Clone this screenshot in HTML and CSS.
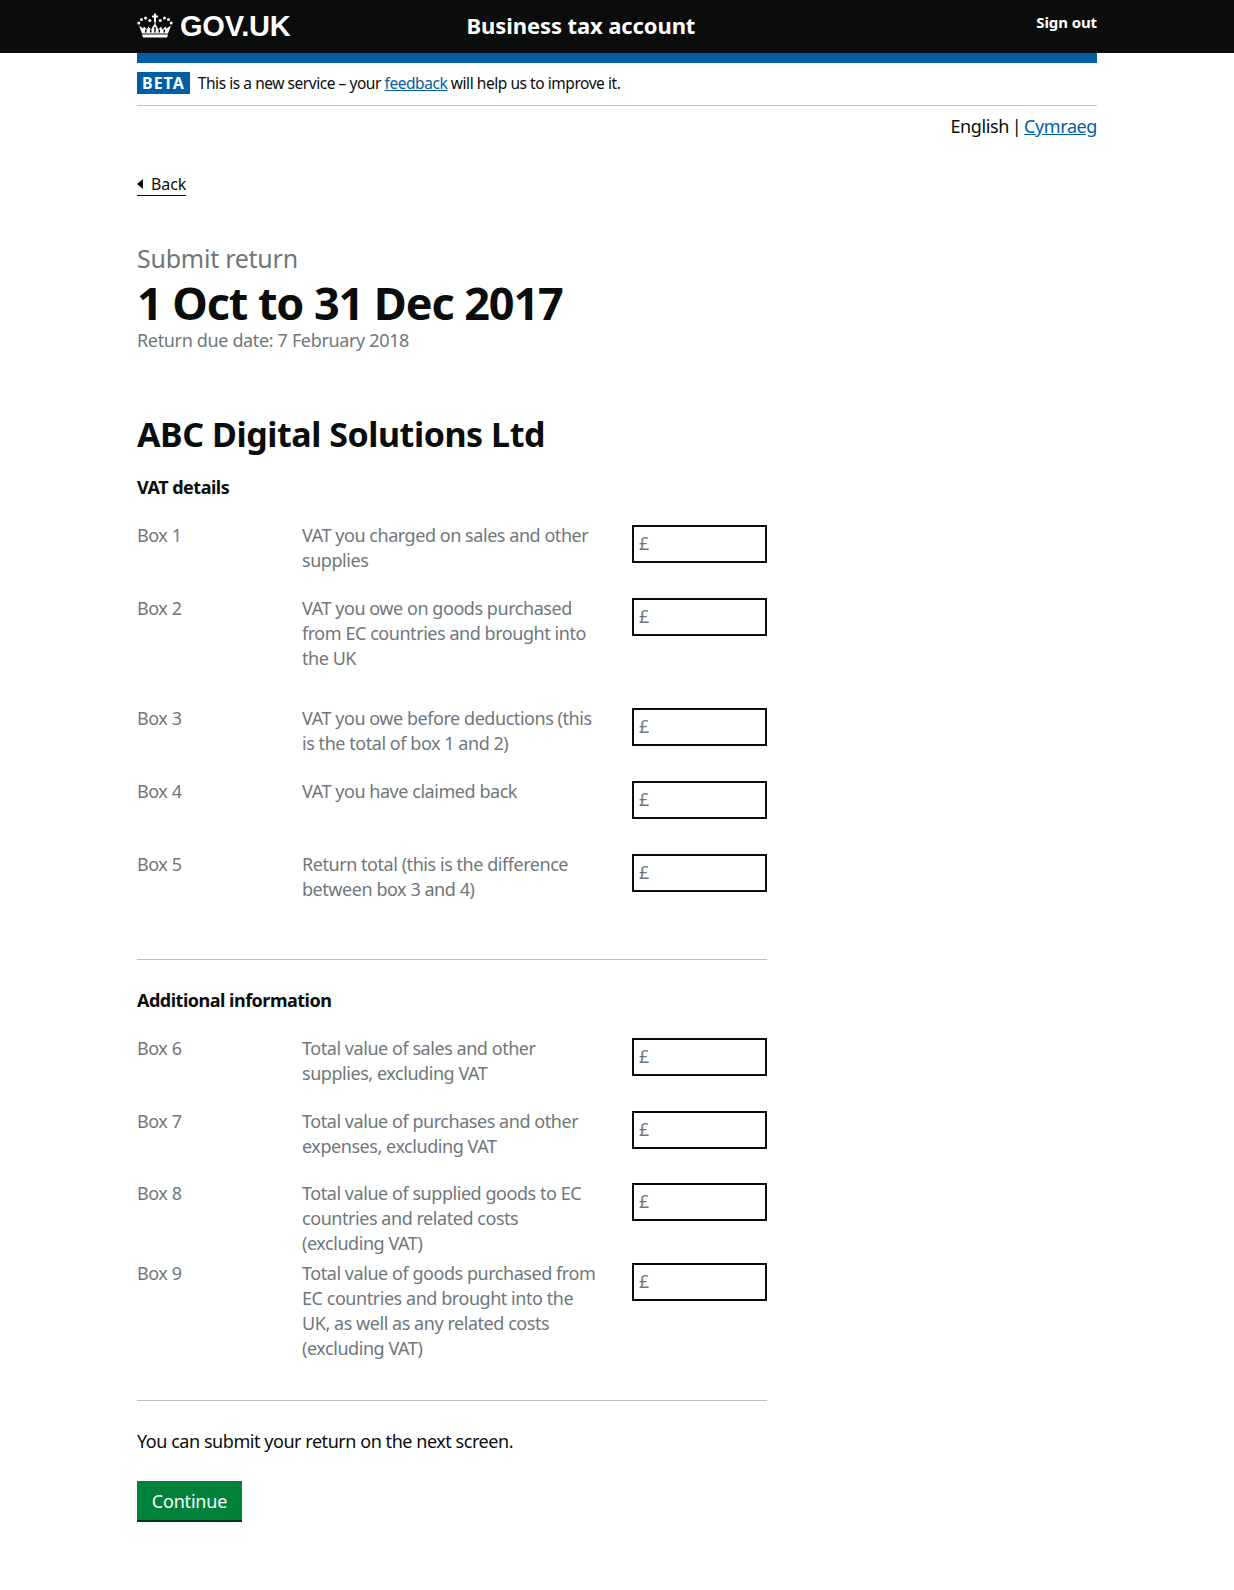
FILE: index.html
```html
<!DOCTYPE html>
<html lang="en">
<head>
    <meta charset="UTF-8">
    <meta name="viewport" content="width=device-width, initial-scale=1.0">
    <title>Submit return</title>
    <link rel="stylesheet" href="styles.css">
</head>
<body>
    <header class="site-header">
        <div class="header-inner">
            <a class="logo" href="#">
                <svg class="crown" width="36" height="26" viewBox="0 0 36 26">
                    <g fill="#fff">
                        <path d="M6 24.500h24l1-3H5z"/>
                        <path d="M5 20.500h26l3-8-4.500 3-1-2-3 3-1.500-3-2.500 3-3-5.500V9h-1v2l-3.500 5.500-2.500-3-1.500 3-3-3-1 2L2 12.500z"/>
                        <rect x="17" y="0.500" width="2" height="8.500"/>
                        <rect x="15" y="2.500" width="6" height="2"/>
                        <circle cx="1.800" cy="10" r="1.500"/>
                        <circle cx="4.500" cy="6.500" r="1.500"/>
                        <circle cx="8.500" cy="5" r="1.500"/>
                        <circle cx="12.800" cy="7.500" r="1.500"/>
                        <circle cx="23.200" cy="7.500" r="1.500"/>
                        <circle cx="27.500" cy="5" r="1.500"/>
                        <circle cx="31.500" cy="6.500" r="1.500"/>
                        <circle cx="34.200" cy="10" r="1.500"/>
                    </g>
                    <g fill="#0b0c0c">
                        <rect x="8" y="16.500" width="1.500" height="3"/>
                        <rect x="13" y="16.500" width="1.500" height="3"/>
                        <rect x="17.200" y="14" width="1.500" height="5.500"/>
                        <rect x="21.500" y="16.500" width="1.500" height="3"/>
                        <rect x="26.500" y="16.500" width="1.500" height="3"/>
                    </g>
                </svg>
                <span>GOV.UK</span>
            </a>
            <a class="service-name" href="#">Business tax account</a>
            <a class="sign-out" href="#">Sign out</a>
        </div>
    </header>

    <div class="wrapper">
        <div class="blue-bar"></div>
        <div class="phase-banner">
            <strong class="phase-tag">BETA</strong>
            <span>This is a new service – your <a href="#">feedback</a> will help us to improve it.</span>
        </div>
        <p class="lang-select">English | <a href="#">Cymraeg</a></p>

        <a class="back-link" href="#">Back</a>

        <p class="caption">Submit return</p>
        <h1>1 Oct to 31 Dec 2017</h1>
        <p class="due-date">Return due date: 7 February 2018</p>

        <h2>ABC Digital Solutions Ltd</h2>

        <form class="vat-form">
            <h3>VAT details</h3>
            <div class="box-row">
                <span class="box-name">Box 1</span>
                <span class="box-desc">VAT you charged on sales and other supplies</span>
                <input class="box-input" type="text" placeholder="£">
            </div>
            <div class="box-row row-tall">
                <span class="box-name">Box 2</span>
                <span class="box-desc">VAT you owe on goods purchased from EC countries and brought into the UK</span>
                <input class="box-input" type="text" placeholder="£">
            </div>
            <div class="box-row">
                <span class="box-name">Box 3</span>
                <span class="box-desc">VAT you owe before deductions (this is the total of box 1 and 2)</span>
                <input class="box-input" type="text" placeholder="£">
            </div>
            <div class="box-row">
                <span class="box-name">Box 4</span>
                <span class="box-desc">VAT you have claimed back</span>
                <input class="box-input" type="text" placeholder="£">
            </div>
            <div class="box-row">
                <span class="box-name">Box 5</span>
                <span class="box-desc">Return total (this is the difference between box 3 and 4)</span>
                <input class="box-input" type="text" placeholder="£">
            </div>

            <hr class="divider first-divider">

            <h3 class="second-heading">Additional information</h3>
            <div class="box-row">
                <span class="box-name">Box 6</span>
                <span class="box-desc">Total value of sales and other supplies, excluding VAT</span>
                <input class="box-input" type="text" placeholder="£">
            </div>
            <div class="box-row row-short">
                <span class="box-name">Box 7</span>
                <span class="box-desc">Total value of purchases and other expenses, excluding VAT</span>
                <input class="box-input" type="text" placeholder="£">
            </div>
            <div class="box-row row-snug">
                <span class="box-name">Box 8</span>
                <span class="box-desc">Total value of supplied goods to EC countries and related costs (excluding VAT)</span>
                <input class="box-input" type="text" placeholder="£">
            </div>
            <div class="box-row row-last">
                <span class="box-name">Box 9</span>
                <span class="box-desc">Total value of goods purchased from EC countries and brought into the UK, as well as any related costs (excluding VAT)</span>
                <input class="box-input" type="text" placeholder="£">
            </div>

            <hr class="divider">

            <p class="next-note">You can submit your return on the next screen.</p>
            <button class="button" type="button">Continue</button>
        </form>
    </div>
</body>
</html>
```

FILE: styles.css
```css
* {
    box-sizing: border-box;
}

body {
    margin: 0;
    background-color: #ffffff;
    color: #0b0c0c;
    font-family: "Noto Sans", Arial, sans-serif;
    font-size: 18px;
    line-height: 25px;
    letter-spacing: -0.45px;
}

a {
    color: #005ea5;
}

p {
    margin: 0;
}

.site-header {
    height: 53px;
    background-color: #0b0c0c;
}

.header-inner {
    width: 960px;
    margin: 0 auto;
    height: 53px;
    display: flex;
}

.logo {
    display: flex;
    align-items: center;
    gap: 7px;
    color: #fff;
    text-decoration: none;
    font-family: "Liberation Sans", Arial, sans-serif;
    font-weight: 700;
    font-size: 29px;
    line-height: 51px;
    letter-spacing: -0.2px;
}

.crown {
    margin-bottom: 2px;
}

.service-name {
    margin-left: 176px;
    color: #fff;
    text-decoration: none;
    font-weight: 700;
    font-size: 22px;
    line-height: 51px;
    letter-spacing: -0.1px;
}

.sign-out {
    margin-left: auto;
    color: #fff;
    text-decoration: none;
    font-weight: 700;
    font-size: 15px;
    line-height: 45px;
    letter-spacing: -0.1px;
}

.wrapper {
    width: 960px;
    margin: 0 auto;
}

.blue-bar {
    height: 10px;
    background-color: #005ea5;
}

.phase-banner {
    display: flex;
    align-items: center;
    gap: 8px;
    height: 43px;
    padding-bottom: 2px;
    border-bottom: 1px solid #bfc1c3;
    font-size: 15.500px;
    letter-spacing: -0.45px;
}

.phase-tag {
    background-color: #005ea5;
    color: #fff;
    font-size: 16px;
    line-height: 22px;
    letter-spacing: 1px;
    padding: 0 5px;
}

.lang-select {
    text-align: right;
    margin-top: 8px;
    letter-spacing: -0.4px;
    word-spacing: -1.500px;
}

.back-link {
    display: inline-block;
    margin-top: 34px;
    padding-left: 14px;
    color: #0b0c0c;
    font-size: 16px;
    line-height: 22px;
    letter-spacing: -0.1px;
    text-decoration: none;
    border-bottom: 1px solid #0b0c0c;
    position: relative;
}

.back-link::before {
    content: "";
    position: absolute;
    left: 0;
    top: 6px;
    border-top: 5px solid transparent;
    border-bottom: 5px solid transparent;
    border-right: 6px solid #0b0c0c;
}

.caption {
    margin-top: 47px;
    color: #6f777b;
    font-size: 25px;
    line-height: 30px;
    letter-spacing: -0.25px;
}

h1 {
    margin: 2px 0 -2px;
    font-size: 45px;
    line-height: 55px;
    font-weight: 700;
    letter-spacing: -1.100px;
}

.due-date {
    color: #6f777b;
    letter-spacing: -0.35px;
}

h2 {
    margin: 59px 0 0;
    font-size: 34px;
    line-height: 44px;
    font-weight: 700;
    letter-spacing: -0.45px;
}

.vat-form {
    width: 630px;
}

h3 {
    margin: 19px 0 23px;
    font-size: 18px;
    line-height: 25px;
    font-weight: 700;
    letter-spacing: -0.5px;
}

.second-heading {
    margin-top: 28px;
    margin-bottom: 23px;
}

.box-row {
    display: grid;
    grid-template-columns: 165px 330px 135px;
    height: 73px;
    color: #6f777b;
}

.row-tall {
    height: 110px;
}

.row-short {
    height: 72px;
}

.row-snug {
    height: 80px;
}

.row-last {
    height: 139px;
}

.box-desc {
    padding-right: 32px;
}

.box-input {
    width: 135px;
    height: 38px;
    margin-top: 2px;
    border: 2px solid #0b0c0c;
    padding: 0 5px 2px;
    font-family: inherit;
    font-size: 18px;
    background: #fff;
}

.box-input::placeholder {
    color: #6f777b;
    opacity: 1;
}

.divider {
    border: 0;
    border-top: 1px solid #bfc1c3;
    margin: 0;
}

.first-divider {
    margin-top: 34px;
}

.next-note {
    margin-top: 28px;
}

.button {
    display: block;
    margin-top: 27px;
    width: 105px;
    height: 41px;
    border: 0;
    border-bottom: 2px solid #003618;
    background-color: #00823b;
    color: #fff;
    font-family: inherit;
    font-size: 18px;
    letter-spacing: -0.2px;
    padding: 0;
}
```
